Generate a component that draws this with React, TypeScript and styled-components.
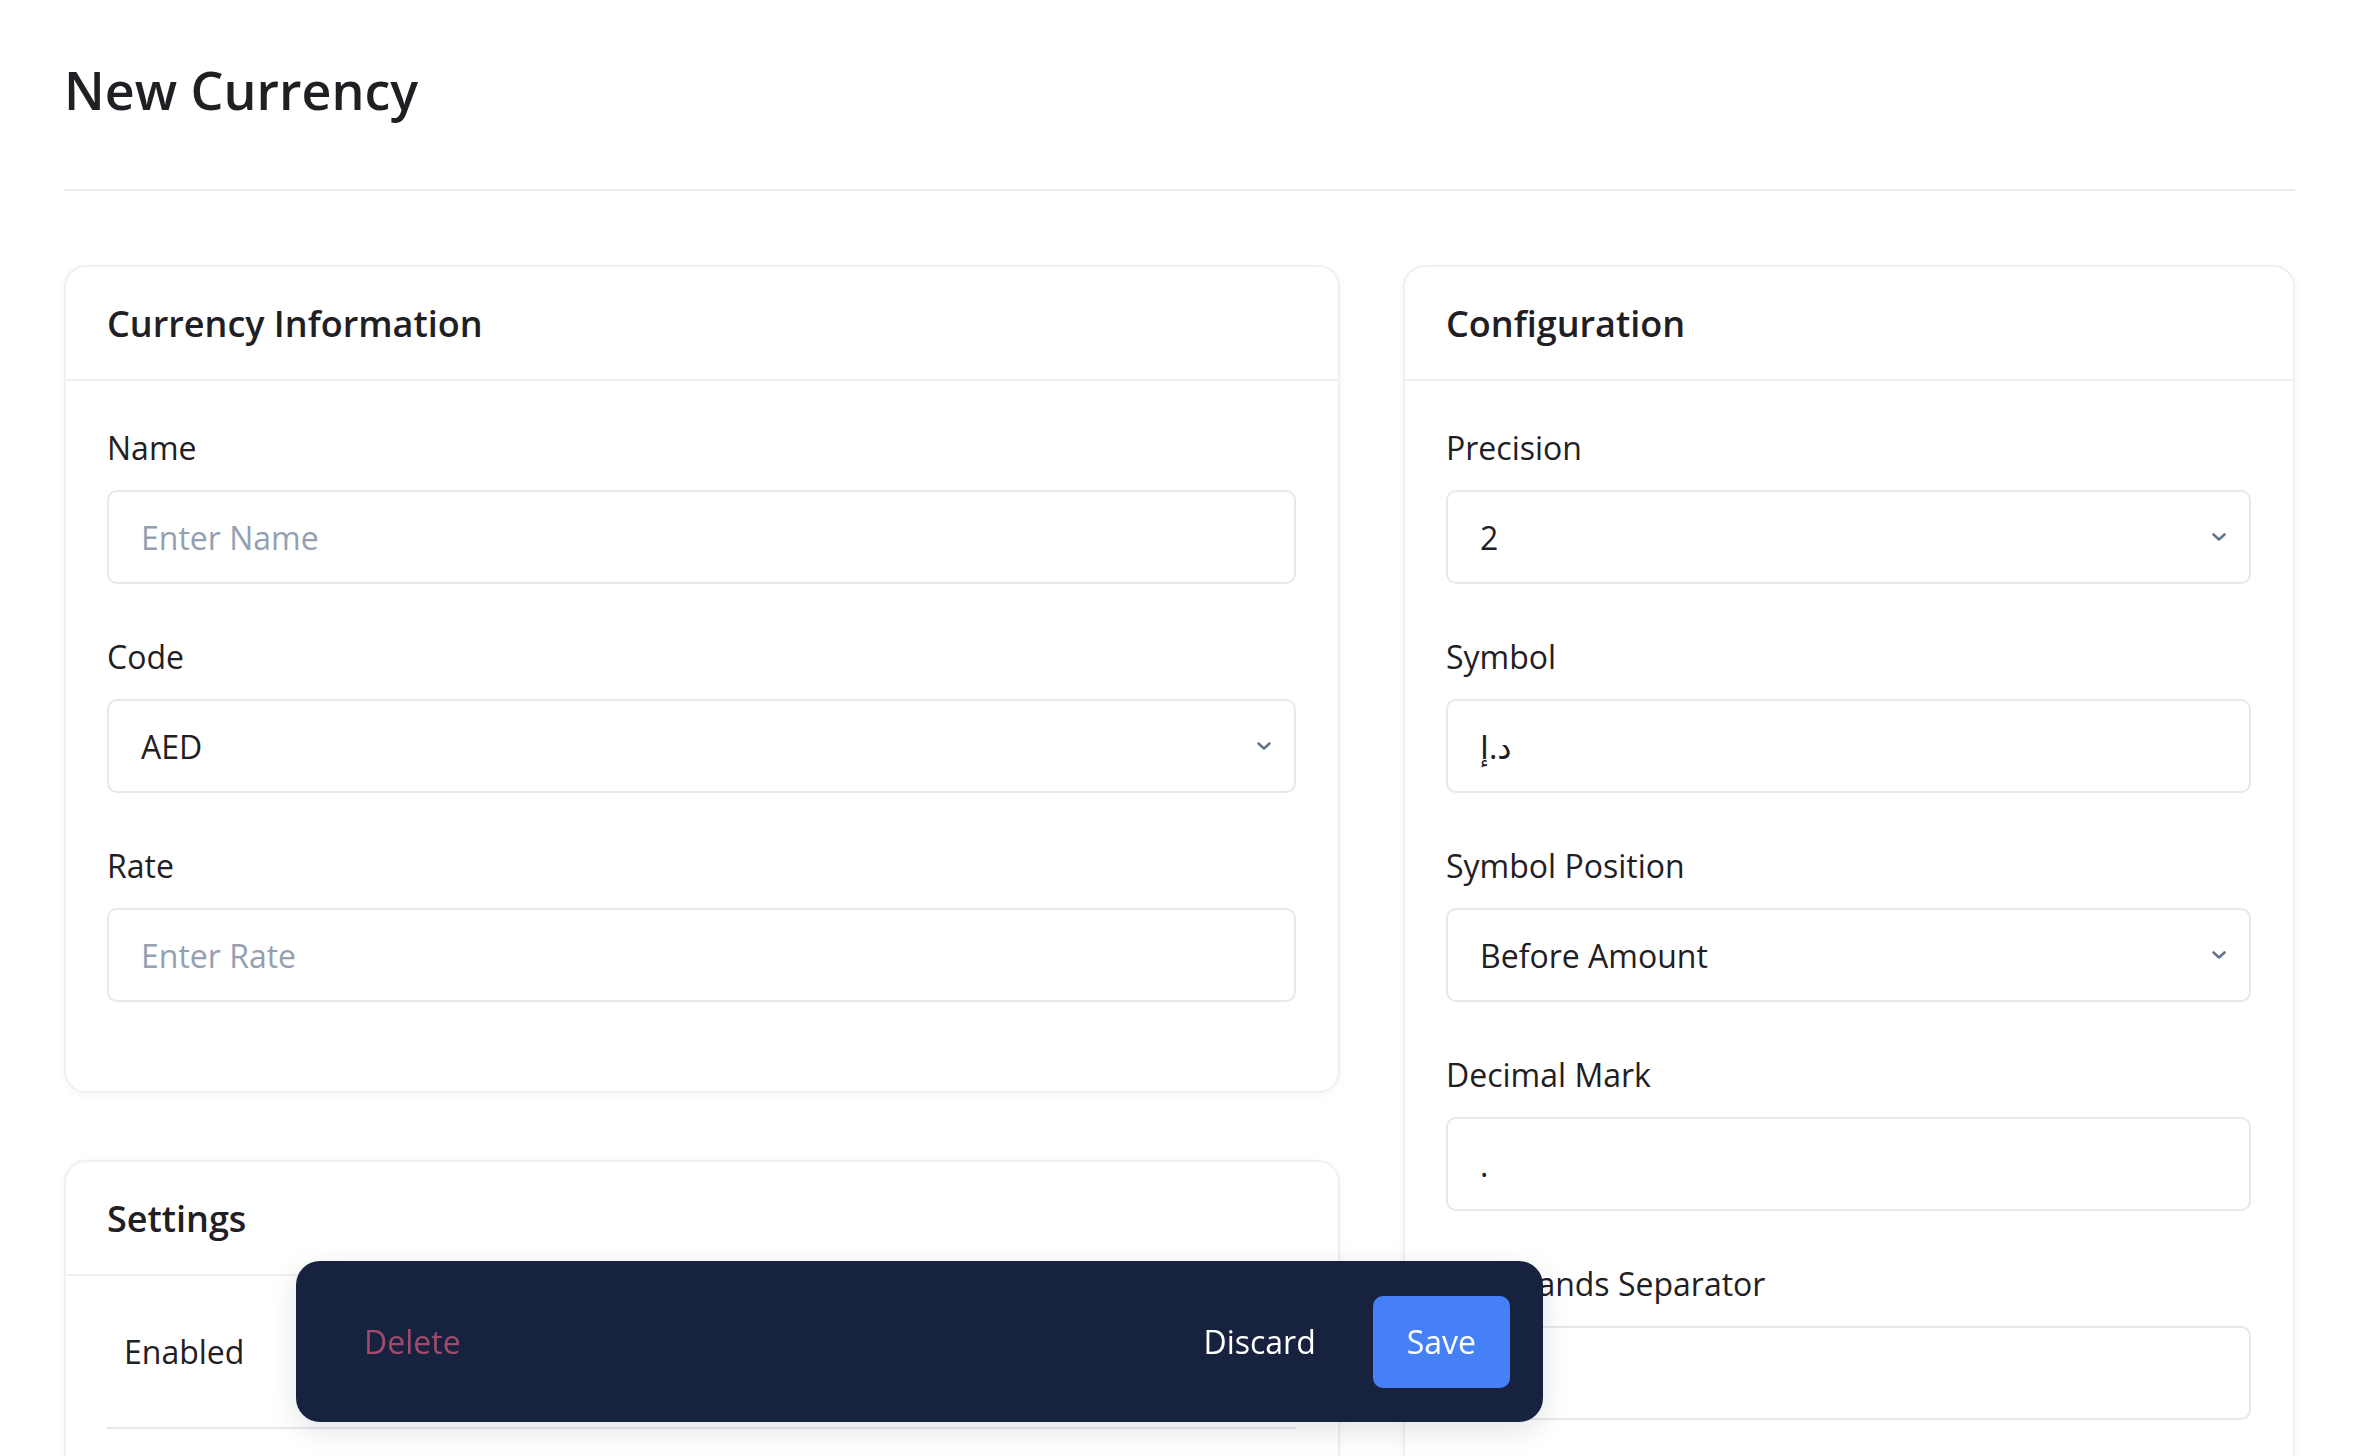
import React, { FunctionComponent } from 'react'
import styled, { createGlobalStyle } from 'styled-components'

const GlobalStyle = createGlobalStyle`
  * {
    box-sizing: border-box;
  }
  body {
    margin: 0;
    background: #ffffff;
    font-family: 'Open Sans', 'DejaVu Sans', sans-serif;
    color: #1f2024;
  }
`

const Page = styled.div`
  padding: 54px 65px 120px 64px;
`

const Title = styled.h1`
  margin: 0;
  font-size: 52px;
  line-height: 72px;
  font-weight: 600;
  color: #1f2024;
`

const Divider = styled.div`
  height: 2px;
  margin-top: 63px;
  background: #e9ecf1;
`

const Columns = styled.div`
  display: grid;
  grid-template-columns: 1276px 1fr;
  gap: 63px;
  margin-top: 74px;
  align-items: start;
`

const Stack = styled.div`
  display: flex;
  flex-direction: column;
  gap: 67px;
`

const Card = styled.section`
  background: #ffffff;
  border: 2px solid #eef0f4;
  border-radius: 22px;
  box-shadow: 0 2px 10px rgba(15, 23, 42, 0.04);
`

const CardHeader = styled.div`
  height: 114px;
  display: flex;
  align-items: center;
  padding: 0 41px;
  border-bottom: 2px solid #eef0f4;
  font-size: 36px;
  font-weight: 600;
  color: #1f2024;
`

const CardBody = styled.div<{ $bottom?: number }>`
  display: flex;
  flex-direction: column;
  gap: 49px;
  padding: 43px 42px ${p => p.$bottom ?? 89}px 41px;
`

const Field = styled.div`
  display: flex;
  flex-direction: column;
  gap: 18px;
`

const Label = styled.label`
  font-size: 32px;
  line-height: 48px;
  color: #1f2024;
`

const Input = styled.input`
  height: 94px;
  width: 100%;
  padding: 0 32px;
  border: 2px solid #e6e8ee;
  border-radius: 10px;
  background: #ffffff;
  font-family: 'Open Sans', 'DejaVu Sans', sans-serif;
  font-size: 32px;
  color: #1f2024;
  outline: none;

  &::placeholder {
    color: #94a0b2;
  }
`

const SelectBox = styled.div`
  height: 94px;
  display: flex;
  align-items: center;
  justify-content: space-between;
  padding: 0 20px 0 32px;
  border: 2px solid #e6e8ee;
  border-radius: 10px;
  font-size: 32px;
  color: #1f2024;
`

const SettingRow = styled.div`
  display: flex;
  align-items: center;
  height: 153px;
  margin: 0 42px 0 41px;
  padding: 0 17px;
  border-bottom: 2px solid #e6e8ee;
  font-size: 32px;
  color: #1f2024;
`

const ActionBar = styled.div`
  position: fixed;
  left: 296px;
  bottom: 34px;
  width: 1247px;
  height: 161px;
  display: flex;
  align-items: center;
  gap: 23px;
  padding: 0 33px 0 34px;
  background: #17223f;
  border-radius: 24px;
  box-shadow: 0 8px 28px rgba(15, 23, 42, 0.12);
`

const BarButton = styled.button<{ $tone: 'danger' | 'plain' | 'primary' }>`
  height: 92px;
  padding: 0 34px;
  border: none;
  border-radius: 10px;
  font-family: 'Open Sans', sans-serif;
  font-size: 32px;
  cursor: pointer;
  background: ${p => (p.$tone === 'primary' ? '#4580f6' : 'transparent')};
  color: ${p => (p.$tone === 'danger' ? '#a04a6c' : '#ffffff')};
`

const Spacer = styled.div`
  flex: 1;
`

const Chevron: FunctionComponent = () => (
  <svg width="20" height="20" viewBox="0 0 20 20" fill="none">
    <path d="M4.5 7.5 L10 12.5 L15.5 7.5" stroke="#64748b" strokeWidth="2.6" strokeLinecap="round" strokeLinejoin="round" />
  </svg>
)

const Select: FunctionComponent<{ value: string }> = ({ value }) => (
  <SelectBox>
    <span>{value}</span>
    <Chevron />
  </SelectBox>
)

export default function App() {
  return (
    <>
      <GlobalStyle />
      <Page>
        <Title>New Currency</Title>
        <Divider />
        <Columns>
          <Stack>
            <Card>
              <CardHeader>Currency Information</CardHeader>
              <CardBody>
                <Field>
                  <Label>Name</Label>
                  <Input placeholder="Enter Name" />
                </Field>
                <Field>
                  <Label>Code</Label>
                  <Select value="AED" />
                </Field>
                <Field>
                  <Label>Rate</Label>
                  <Input placeholder="Enter Rate" />
                </Field>
              </CardBody>
            </Card>
            <Card>
              <CardHeader>Settings</CardHeader>
              <SettingRow>Enabled</SettingRow>
              <CardBody $bottom={60} />
            </Card>
          </Stack>
          <Card>
            <CardHeader>Configuration</CardHeader>
            <CardBody>
              <Field>
                <Label>Precision</Label>
                <Select value="2" />
              </Field>
              <Field>
                <Label>Symbol</Label>
                <Input defaultValue="د.إ" />
              </Field>
              <Field>
                <Label>Symbol Position</Label>
                <Select value="Before Amount" />
              </Field>
              <Field>
                <Label>Decimal Mark</Label>
                <Input defaultValue="." />
              </Field>
              <Field>
                <Label>Thousands Separator</Label>
                <Input defaultValue="," />
              </Field>
            </CardBody>
          </Card>
        </Columns>
      </Page>
      <ActionBar>
        <BarButton $tone="danger">Delete</BarButton>
        <Spacer />
        <BarButton $tone="plain">Discard</BarButton>
        <BarButton $tone="primary">Save</BarButton>
      </ActionBar>
    </>
  )
}
